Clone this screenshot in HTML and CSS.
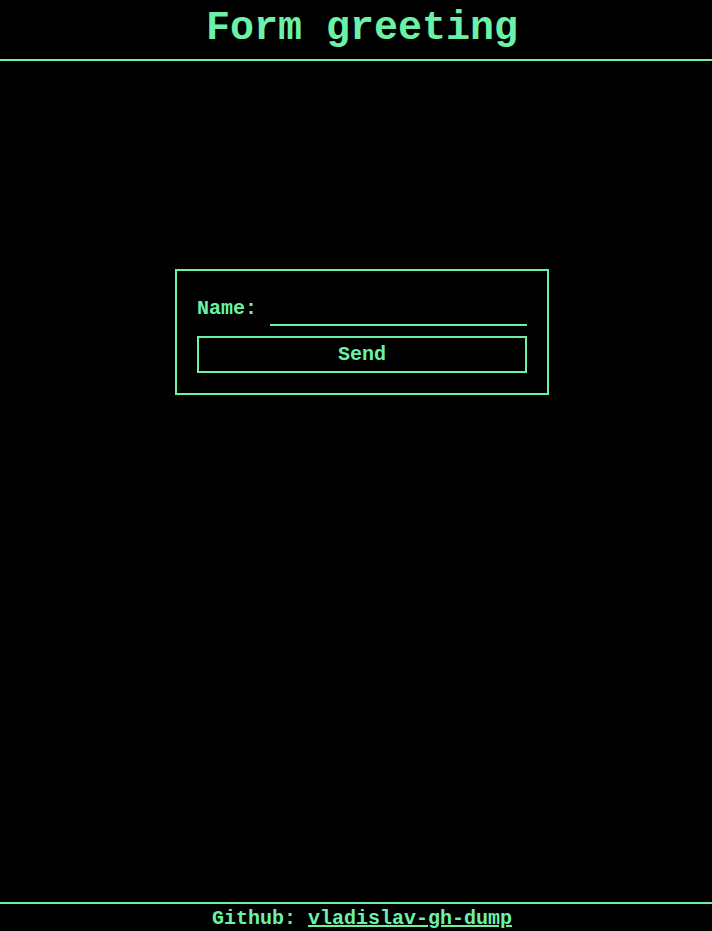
FILE: index.html
```html
<!DOCTYPE html>
<html lang="en">
<head>
<meta charset="utf-8">
<title>Form greeting</title>
<link rel="stylesheet" href="styles.css">
</head>
<body>
<header class="header">
  <h1 class="title">Form greeting</h1>
</header>
<main class="main">
  <form class="card">
    <div class="row">
      <label class="label" for="name">Name:</label>
      <input class="input" id="name" type="text">
    </div>
    <button class="button" type="button">Send</button>
  </form>
</main>
<footer class="footer">
  <span>Github: <a class="link" href="#">vladislav-gh-dump</a></span>
</footer>
</body>
</html>
```
FILE: styles.css
```css
* { box-sizing: border-box; }
html, body { margin: 0; padding: 0; background: #000; }
body {
  min-height: 100vh;
  display: flex;
  flex-direction: column;
  color: #6cf2a6;
  font-family: "Courier New", "Nimbus Mono PS", "Nimbus Mono L", "FreeMono", Courier, "Liberation Mono", monospace;
  font-weight: bold;
}
.header {
  height: 61px;
  border-bottom: 2px solid #6cf2a6;
  display: flex;
  align-items: center;
  justify-content: center;
  padding-left: 12px;
}
.title {
  margin: 0;
  font-size: 40px;
  line-height: 1;
  font-weight: bold;
  padding-bottom: 2px;
}
.main {
  flex: 1;
  display: flex;
  justify-content: center;
  align-items: flex-start;
  padding-left: 12px;
  padding-top: 208px;
}
.card {
  width: 374px;
  border: 2px solid #6cf2a6;
  padding: 20px;
  display: flex;
  flex-direction: column;
  gap: 10px;
}
.row {
  display: flex;
  align-items: center;
  gap: 13px;
  height: 35px;
}
.label {
  font-size: 20px;
  line-height: 1;
}
.input {
  flex: 1;
  height: 35px;
  background: transparent;
  border: none;
  border-bottom: 2px solid #6cf2a6;
  color: #6cf2a6;
  font-family: inherit;
  font-size: 20px;
  outline: none;
}
.button {
  height: 37px;
  background: #000;
  border: 2px solid #6cf2a6;
  color: #6cf2a6;
  font-family: inherit;
  font-weight: bold;
  font-size: 20px;
  cursor: pointer;
}
.footer {
  height: 29px;
  border-top: 2px solid #6cf2a6;
  display: flex;
  align-items: center;
  justify-content: center;
  padding-left: 12px;
  padding-top: 2px;
  font-size: 20px;
}
.link { color: #6cf2a6; }
```
